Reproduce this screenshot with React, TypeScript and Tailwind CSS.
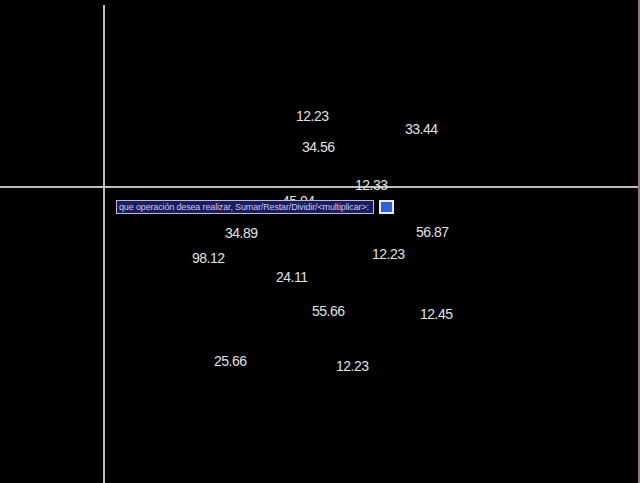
import React from "react";

const labels: { t: string; x: number; y: number }[] = [
  { t: "12.23", x: 296, y: 116 },
  { t: "33.44", x: 405, y: 129 },
  { t: "34.56", x: 302, y: 147 },
  { t: "12.33", x: 355, y: 185 },
  { t: "45.04", x: 282, y: 201 },
  { t: "34.89", x: 225, y: 233 },
  { t: "56.87", x: 416, y: 232 },
  { t: "98.12", x: 192, y: 258 },
  { t: "12.23", x: 372, y: 254 },
  { t: "24.11", x: 276, y: 277 },
  { t: "55.66", x: 312, y: 311 },
  { t: "12.45", x: 420, y: 314 },
  { t: "25.66", x: 214, y: 361 },
  { t: "12.23", x: 336, y: 366 },
];

export default function App() {
  return (
    <div className="relative w-[640px] h-[483px] bg-black overflow-hidden" style={{ fontFamily: '"Liberation Sans", Arial, sans-serif' }}>
      {/* right border */}
      <div className="absolute right-0 top-0 w-[2px] h-full bg-[#8c7b72]" />
      {/* crosshair */}
      <div className="absolute left-0 top-[186px] w-[638px] h-[2px] bg-[#bdbdbd]" />
      <div className="absolute left-[103px] top-[5px] w-[2px] h-[478px] bg-[#bdbdbd]" />
      {labels.map((l, i) => (
        <div
          key={i}
          className="absolute text-[14px] leading-none text-[#e2e2e2] tracking-[-0.5px] whitespace-nowrap"
          style={{ left: l.x, top: l.y - 7 }}
        >
          {l.t}
        </div>
      ))}
      {/* command tooltip */}
      <div className="absolute left-[116px] top-[200px] w-[258px] h-[14px] bg-[#1b1b5e] border border-[#b8b8e0] flex items-center px-[2px]">
        <span className="text-[9px] leading-none text-[#c8c8ea] whitespace-nowrap tracking-[-0.15px]">
          que operación desea realizar, Sumar/Restar/Dividir/&lt;multiplicar&gt;:
        </span>
      </div>
      <div className="absolute left-[379px] top-[200px] w-[15px] h-[14px] bg-[#2f62d6] border-2 border-[#e8e8f8]" />
    </div>
  );
}
